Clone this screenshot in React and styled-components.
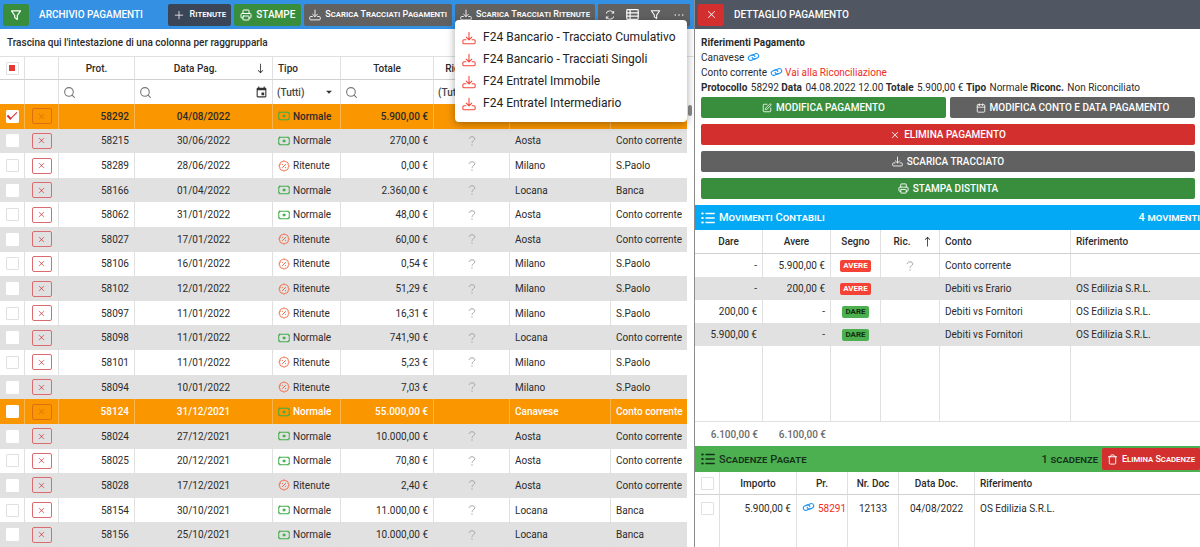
import styled, { createGlobalStyle, css } from "styled-components"
import {
  LiaEllipsisHSolid,
  LiaLongArrowAltDownSolid,
  LiaLongArrowAltUpSolid,
  LiaPlusSolid,
  LiaSyncSolid,
  LiaTimesSolid,
} from "react-icons/lia"
import { MdArrowDropDown, MdEvent } from "react-icons/md"
import { BadgePercent, Calendar, Printer, Search, SquarePen, Trash } from "lucide-react"

const GlobalStyle = createGlobalStyle`
  * {
    box-sizing: border-box;
  }
  body {
    margin: 0;
    background: #fff;
    color: #2b2b2b;
    font: 10px/15px Roboto, sans-serif;
  }
  button, input, select {
    font: inherit;
    color: inherit;
  }
  svg {
    flex: none;
  }
`

const colors = {
  green: "#388e3c",
  red: "#d32f2f",
  grey: "#616161",
  slate: "#3b4558",
}

const Page = styled.div`
  display: grid;
  grid-template-columns: minmax(0, 694fr) minmax(0, 506fr);
  height: 100vh;
  overflow: hidden;
`

const Pane = styled.section`
  display: flex;
  flex-direction: column;
  min-width: 0;
  min-height: 0;
`

const DetailPane = styled(Pane)`
  border-left: 1px solid #8c8c8c;
  overflow: hidden;
`

const Toolbar = styled.header`
  display: flex;
  align-items: center;
  gap: 3px;
  height: 29px;
  padding: 0 4px 0 3px;
  color: #fff;
  background: ${({ $dark }) => ($dark ? "#505662" : "#3390e3")};
`

const Title = styled.h1`
  flex: 1;
  margin: 0;
  padding-left: 7px;
  font-size: 10px;
  font-weight: 500;
  white-space: nowrap;
`

const Button = styled.button`
  display: flex;
  align-items: center;
  justify-content: center;
  gap: 4px;
  height: 22px;
  padding: 0 6px;
  border: 0;
  border-radius: 2px;
  font-size: 10px;
  font-weight: 500;
  white-space: nowrap;
  color: #fff;
  background: ${({ $color }) => colors[$color]};
  ${({ $caps }) =>
    $caps &&
    css`
      padding: 0 5px;
      font-size: 9px;
      font-variant: small-caps;
    `}
  ${({ $square }) =>
    $square &&
    css`
      flex: none;
      width: 26px;
      padding: 0;
    `}
`

const ButtonGroup = styled.div`
  display: flex;
  border-radius: 2px;
  background: ${colors.grey};
`

const GroupButton = styled(Button)`
  width: 23px;
  padding: 0;
`

const MenuAnchor = styled.div`
  position: relative;
`

const Menu = styled.ul`
  position: absolute;
  top: 16px;
  left: 0;
  z-index: 2;
  width: 232px;
  margin: 0;
  padding: 7px 0;
  list-style: none;
  border-radius: 4px;
  background: #fff;
  box-shadow: 0 2px 8px rgba(0, 0, 0, 0.35);
`

const MenuItem = styled.button`
  display: flex;
  align-items: center;
  gap: 7px;
  width: 100%;
  height: 22px;
  padding: 0 7px;
  border: 0;
  background: none;
  font-size: 12px;
  white-space: nowrap;
  color: #222;
  svg {
    color: #f44336;
  }
`

const GroupPanel = styled.div`
  height: 27px;
  padding: 6px 7px;
  font-weight: 500;
`

const GridArea = styled.div`
  display: flex;
  flex: 1;
  min-height: 0;
`

const TableWrap = styled.div`
  flex: 1;
  min-width: 0;
  min-height: 0;
`

const ScrollTrack = styled.div`
  width: 7px;
  padding: 48px 2px 0 1px;
  border-top: 1px solid #e0e0e0;
`

const ScrollThumb = styled.div`
  height: 11px;
  border-radius: 2px;
  background: #8a8a8a;
`

const Table = styled.table`
  width: 100%;
  height: 100%;
  table-layout: fixed;
  border-collapse: separate;
  border-spacing: 0;
`

const cell = css`
  padding: 0 5px;
  border-right: 1px solid #e0e0e0;
  text-align: ${({ $align }) => $align || "left"};
  white-space: nowrap;
  overflow: hidden;
  &:last-child {
    border-right: 0;
  }
`

const Th = styled.th`
  ${cell}
  height: ${({ $height }) => $height || 24}px;
  font-weight: 500;
  border-top: ${({ $top }) => ($top ? "1px solid #e0e0e0" : "0")};
  border-bottom: ${({ $bottom }) => ($bottom ? "1px solid #d0d0d0" : "0")};
`

const FilterCell = styled(Th)`
  padding: 0 4px;
`

const Td = styled.td`
  ${cell}
`

const Row = styled.tr`
  background: ${({ $striped }) => ($striped ? "#e1e1e1" : "#fff")};
  ${({ $height }) =>
    $height &&
    css`
      height: ${$height}px;
    `}
  ${({ $selected }) =>
    $selected &&
    css`
      background: #f99600;
      font-weight: 500;
      color: ${$selected === "light" ? "#fff" : "#2b2b2b"};
      ${Td} {
        border-color: #fbb54c;
      }
    `}
`

const Flex = styled.div`
  display: flex;
  align-items: center;
  gap: 3px;
`

const HeadLabel = styled.span`
  flex: 1;
`

const Checkbox = styled.input.attrs({ type: "checkbox" })`
  appearance: none;
  display: grid;
  place-items: center;
  width: 13px;
  height: 13px;
  margin: 0 auto;
  border: 1px solid ${({ $bare }) => ($bare ? "#fff" : "#e0e0e0")};
  border-radius: 1px;
  background: #fff;
  &:checked::after {
    content: "";
    width: 8px;
    height: 4px;
    margin-top: -3px;
    border: solid ${colors.red};
    border-width: 0 0 1px 2px;
    transform: rotate(-45deg);
  }
`

const CheckAll = styled(Checkbox)`
  &:checked::after {
    width: 6px;
    height: 6px;
    margin: 0;
    border: 0;
    background: #e53935;
    transform: none;
  }
`

const DeleteButton = styled.button`
  display: flex;
  align-items: center;
  justify-content: center;
  width: 20px;
  height: 16px;
  margin: 0 auto;
  padding: 0;
  border: 1px solid #dc6b70;
  border-radius: 2px;
  background: none;
  color: #d0454c;
  &:disabled {
    border-color: #dc6f10;
    color: #dc6f10;
  }
`

const FilterBox = styled.label`
  display: flex;
  align-items: center;
  color: #777;
`

const FilterInput = styled.input`
  flex: 1;
  width: 0;
  min-width: 0;
  padding: 0 4px;
  border: 0;
  outline: 0;
  background: none;
`

const FilterSelect = styled.select`
  appearance: none;
  flex: 1;
  width: 0;
  padding: 0;
  border: 0;
  outline: 0;
  background: none;
  color: #444;
`

const TypeIcon = styled.span`
  display: flex;
  color: ${({ $kind }) => ($kind === "Normale" ? "#3fae49" : "#f4623a")};
`

const QuestionSvg = styled.svg`
  display: block;
  margin: 0 auto;
  color: #a5a5a5;
`

const Info = styled.div`
  padding: 6px 6px 2px;
  p {
    margin: 0;
    white-space: nowrap;
  }
  b {
    margin-right: 1px;
    font-weight: 700;
  }
  svg {
    vertical-align: -1px;
  }
`

const RedLink = styled.a`
  color: #f12c22;
  text-decoration: none;
`

const IconLink = styled.a`
  color: #2196f3;
`

const Actions = styled.div`
  display: grid;
  grid-template-columns: 1fr 1fr;
  gap: 6px 4px;
  padding: 0 5px 6px 6px;
`

const ActionButton = styled(Button)`
  grid-column: ${({ $wide }) => ($wide ? "1 / -1" : "auto")};
  height: 21px;
`

const SectionBar = styled.div`
  display: flex;
  align-items: center;
  gap: 4px;
  height: ${({ $green }) => ($green ? 26 : 25)}px;
  padding-left: 6px;
  white-space: nowrap;
  color: ${({ $green }) => ($green ? "#15301a" : "#fff")};
  background: ${({ $green }) => ($green ? "#4caf50" : "#03a9f4")};
`

const SectionTitle = styled.h2`
  flex: 1;
  margin: 0;
  font-size: 11px;
  font-weight: 500;
  font-variant: small-caps;
`

const SectionCount = styled.span`
  font-size: 11px;
  font-weight: 500;
  font-variant: small-caps;
`

const MovementsArea = styled.div`
  height: 216px;
`

const Badge = styled.span`
  display: inline-block;
  padding: 0 3px;
  border-radius: 2px;
  font-size: 8px;
  line-height: 12px;
  font-weight: 700;
  vertical-align: middle;
  color: ${({ $kind }) => ($kind === "AVERE" ? "#fff" : "#12300f")};
  background: ${({ $kind }) => ($kind === "AVERE" ? "#f44336" : "#4caf50")};
`

const TotalCell = styled.td`
  height: 25px;
  padding: 0 5px;
  border-top: 1px solid #e0e0e0;
  text-align: right;
  font-weight: 500;
  color: #6b6b6b;
`

const menuItems = [
  "F24 Bancario - Tracciato Cumulativo",
  "F24 Bancario - Tracciati Singoli",
  "F24 Entratel Immobile",
  "F24 Entratel Intermediario",
]

const payments = [
  ["58292", "04/08/2022", "Normale", "5.900,00 €", "Canavese", "Conto corrente", "dark"],
  ["58215", "30/06/2022", "Normale", "270,00 €", "Aosta", "Conto corrente"],
  ["58289", "28/06/2022", "Ritenute", "0,00 €", "Milano", "S.Paolo"],
  ["58166", "01/04/2022", "Normale", "2.360,00 €", "Locana", "Banca"],
  ["58062", "31/01/2022", "Normale", "48,00 €", "Aosta", "Conto corrente"],
  ["58027", "17/01/2022", "Ritenute", "60,00 €", "Aosta", "Conto corrente"],
  ["58106", "16/01/2022", "Ritenute", "0,54 €", "Milano", "S.Paolo"],
  ["58102", "12/01/2022", "Ritenute", "51,29 €", "Milano", "S.Paolo"],
  ["58097", "11/01/2022", "Ritenute", "16,31 €", "Milano", "S.Paolo"],
  ["58098", "11/01/2022", "Normale", "741,90 €", "Locana", "Conto corrente"],
  ["58101", "11/01/2022", "Ritenute", "5,23 €", "Milano", "S.Paolo"],
  ["58094", "10/01/2022", "Ritenute", "7,03 €", "Milano", "S.Paolo"],
  ["58124", "31/12/2021", "Normale", "55.000,00 €", "Canavese", "Conto corrente", "light"],
  ["58024", "27/12/2021", "Normale", "10.000,00 €", "Aosta", "Conto corrente"],
  ["58025", "20/12/2021", "Normale", "70,80 €", "Aosta", "Conto corrente"],
  ["58028", "17/12/2021", "Ritenute", "2,40 €", "Aosta", "Conto corrente"],
  ["58154", "30/10/2021", "Normale", "11.000,00 €", "Locana", "Banca"],
  ["58156", "25/10/2021", "Normale", "10.000,00 €", "Locana", "Banca"],
]

const movements = [
  ["-", "5.900,00 €", "AVERE", "Conto corrente", ""],
  ["-", "200,00 €", "AVERE", "Debiti vs Erario", "OS Edilizia S.R.L."],
  ["200,00 €", "-", "DARE", "Debiti vs Fornitori", "OS Edilizia S.R.L."],
  ["5.900,00 €", "-", "DARE", "Debiti vs Fornitori", "OS Edilizia S.R.L."],
]

const stroke = {
  fill: "none",
  stroke: "currentColor",
  strokeLinecap: "round",
  strokeLinejoin: "round",
}

const DownloadIcon = ({ size = 12 }) => (
  <svg width={size} height={size} viewBox="0 0 16 16" strokeWidth="1.2" {...stroke}>
    <path d="M8 1.5v8.500M4.800 7l3.200 3.200L11.200 7" />
    <path d="M4.500 10H2.200a1.200 1.200 0 0 0-1.200 1.200v2.100a1.200 1.200 0 0 0 1.200 1.200h11.600a1.200 1.200 0 0 0 1.200-1.200v-2.100a1.200 1.200 0 0 0-1.200-1.200h-2.300" />
  </svg>
)

const FunnelIcon = ({ size = 12 }) => (
  <svg width={size} height={size} viewBox="0 0 16 16" strokeWidth="1.6" {...stroke}>
    <path d="M2 2.5h12L9.7 8.7v5.3L6.3 11.5V8.7z" />
  </svg>
)

const TableListIcon = () => (
  <svg width="13" height="13" viewBox="0 0 16 16" strokeWidth="1.5" {...stroke}>
    <rect x="1" y="2" width="14" height="12" rx="1" />
    <path d="M1 6h14M1 10h14M5 2v12" />
  </svg>
)

const LinkIcon = () => (
  <svg width="13" height="10" viewBox="0 0 16 12" strokeWidth="1.4" {...stroke}>
    <g transform="rotate(-25 8 6)">
      <path d="M8.5 8.6H4.2a2.8 2.8 0 0 1 0-5.6H7a2.8 2.8 0 0 1 2.7 3.5" />
      <path d="M7.5 3.4h4.3a2.8 2.8 0 0 1 0 5.6H9a2.8 2.8 0 0 1-2.7-3.5" />
    </g>
  </svg>
)

const MoneyIcon = () => (
  <svg width="12" height="12" viewBox="0 0 16 16" strokeWidth="1.3" {...stroke}>
    <rect x="1" y="3" width="14" height="10" rx="1" />
    <path d="M1 5.200 3.200 3M15 5.200 12.800 3M1 10.800 3.200 13M15 10.800 12.800 13" />
    <circle cx="8" cy="8" r="1.4" fill="currentColor" />
  </svg>
)

const ListIcon = () => (
  <svg width="14" height="12" viewBox="0 0 14 12" strokeWidth="1.5" {...stroke}>
    <path d="M5 1.5h8.2M5 6h8.2M5 10.5h8.2" />
    <path d="M1.3 1.5h.4M1.3 6h.4M1.3 10.5h.4" strokeWidth="2.2" />
  </svg>
)

const Unknown = () => (
  <QuestionSvg width="8" height="10" viewBox="0 0 8 10" strokeWidth="1" {...stroke}>
    <path d="M1.2 2.5C1.5 1.3 2.6.8 4 .8c1.7 0 2.8.8 2.8 2C6.8 4.600 4 4.500 4 6.500" />
    <path d="M4 8.9v.1" strokeWidth="1.3" />
  </QuestionSvg>
)

const Columns = ({ widths }) => (
  <colgroup>
    {widths.map((width, i) => (
      <col key={i} width={width} />
    ))}
  </colgroup>
)

const TextFilter = ({ label, calendar }) => (
  <FilterBox>
    <Search size={13} />
    <FilterInput type="text" aria-label={label} />
    {calendar && <MdEvent size={13} color="#333" />}
  </FilterBox>
)

const SelectFilter = ({ label }) => (
  <FilterBox>
    <FilterSelect aria-label={label}>
      <option>(Tutti)</option>
    </FilterSelect>
    <MdArrowDropDown size={14} color="#333" />
  </FilterBox>
)

const PaymentsTable = () => (
  <Table>
    <Columns widths={[25, 34, 76, 138, 68, 93, 76, 101, 76]} />
    <thead>
      <tr>
        <Th $top $bottom>
          <CheckAll defaultChecked aria-label="Seleziona tutti" />
        </Th>
        <Th $top $bottom />
        <Th $top $bottom $align="center">Prot.</Th>
        <Th $top $bottom $align="center">
          <Flex>
            <HeadLabel>Data Pag.</HeadLabel>
            <LiaLongArrowAltDownSolid size={13} />
          </Flex>
        </Th>
        <Th $top $bottom>Tipo</Th>
        <Th $top $bottom $align="center">Totale</Th>
        <Th $top $bottom $align="center">Riconciliato</Th>
        <Th $top $bottom aria-label="Immobile" />
        <Th $top $bottom aria-label="Conto" />
      </tr>
      <tr>
        <FilterCell />
        <FilterCell />
        <FilterCell><TextFilter label="Filtra Prot." /></FilterCell>
        <FilterCell><TextFilter label="Filtra Data Pag." calendar /></FilterCell>
        <FilterCell><SelectFilter label="Filtra Tipo" /></FilterCell>
        <FilterCell><TextFilter label="Filtra Totale" /></FilterCell>
        <FilterCell><SelectFilter label="Filtra Riconciliato" /></FilterCell>
        <FilterCell><TextFilter label="Filtra Immobile" /></FilterCell>
        <FilterCell><TextFilter label="Filtra Conto" /></FilterCell>
      </tr>
    </thead>
    <tbody>
      {payments.map(([prot, date, type, total, place, account, selected], i) => (
        <Row key={prot} $striped={i % 2 === 1} $selected={selected}>
          <Td>
            <Checkbox
              $bare={selected || i % 2 === 1}
              defaultChecked={i === 0}
              aria-label={`Seleziona ${prot}`}
            />
          </Td>
          <Td>
            <DeleteButton disabled={Boolean(selected)} aria-label={`Elimina ${prot}`}>
              <LiaTimesSolid size={9} />
            </DeleteButton>
          </Td>
          <Td $align="right">{prot}</Td>
          <Td $align="center">{date}</Td>
          <Td>
            <Flex>
              <TypeIcon $kind={type}>
                {type === "Normale" ? <MoneyIcon /> : <BadgePercent size={12} />}
              </TypeIcon>
              {type}
            </Flex>
          </Td>
          <Td $align="right">{total}</Td>
          <Td>{!selected && <Unknown />}</Td>
          <Td>{place}</Td>
          <Td>{account}</Td>
        </Row>
      ))}
    </tbody>
  </Table>
)

const MovementsTable = () => (
  <Table>
    <Columns widths={[68, 68, 50, 59, 131, 129]} />
    <thead>
      <tr>
        <Th $bottom $align="center">Dare</Th>
        <Th $bottom $align="center">Avere</Th>
        <Th $bottom $align="center">Segno</Th>
        <Th $bottom $align="center">
          <Flex>
            <HeadLabel>Ric.</HeadLabel>
            <LiaLongArrowAltUpSolid size={13} />
          </Flex>
        </Th>
        <Th $bottom>Conto</Th>
        <Th $bottom>Riferimento</Th>
      </tr>
    </thead>
    <tbody>
      {movements.map(([dare, avere, segno, conto, riferimento], i) => (
        <Row key={i} $striped={i % 2 === 1} $height={23}>
          <Td $align="right">{dare}</Td>
          <Td $align="right">{avere}</Td>
          <Td $align="center">
            <Badge $kind={segno}>{segno}</Badge>
          </Td>
          <Td>{i === 0 && <Unknown />}</Td>
          <Td>{conto}</Td>
          <Td>{riferimento}</Td>
        </Row>
      ))}
      <Row>
        <Td />
        <Td />
        <Td />
        <Td />
        <Td />
        <Td />
      </Row>
    </tbody>
    <tfoot>
      <tr>
        <TotalCell>6.100,00 €</TotalCell>
        <TotalCell>6.100,00 €</TotalCell>
        <TotalCell colSpan={4} />
      </tr>
    </tfoot>
  </Table>
)

const DeadlinesTable = () => (
  <Table>
    <Columns widths={[25, 77, 51, 51, 76, 225]} />
    <thead>
      <tr>
        <Th $bottom $height={23}>
          <Checkbox aria-label="Seleziona tutte le scadenze" />
        </Th>
        <Th $bottom $height={23} $align="center">Importo</Th>
        <Th $bottom $height={23} $align="center">Pr.</Th>
        <Th $bottom $height={23} $align="center">Nr. Doc</Th>
        <Th $bottom $height={23} $align="center">Data Doc.</Th>
        <Th $bottom $height={23}>Riferimento</Th>
      </tr>
    </thead>
    <tbody>
      <Row $height={26}>
        <Td>
          <Checkbox aria-label="Seleziona scadenza 58291" />
        </Td>
        <Td $align="right">5.900,00 €</Td>
        <Td>
          <Flex>
            <IconLink href="#58291" aria-label="Apri 58291">
              <LinkIcon />
            </IconLink>
            <RedLink href="#58291">58291</RedLink>
          </Flex>
        </Td>
        <Td $align="center">12133</Td>
        <Td $align="center">04/08/2022</Td>
        <Td>OS Edilizia S.R.L.</Td>
      </Row>
      <Row>
        <Td />
        <Td />
        <Td />
        <Td />
        <Td />
        <Td />
      </Row>
    </tbody>
  </Table>
)

const Archive = () => (
  <Pane>
    <Toolbar>
      <Button $color="green" $square aria-label="Filtra">
        <FunnelIcon size={12} />
      </Button>
      <Title>ARCHIVIO PAGAMENTI</Title>
      <Button $color="slate" $caps>
        <LiaPlusSolid size={12} />
        Ritenute
      </Button>
      <Button $color="green">
        <Printer size={12} />
        STAMPE
      </Button>
      <Button $color="grey" $caps>
        <DownloadIcon />
        Scarica Tracciati Pagamenti
      </Button>
      <MenuAnchor>
        <Button $color="grey" $caps aria-haspopup="true" aria-expanded="true">
          <DownloadIcon />
          Scarica Tracciati Ritenute
        </Button>
        <Menu>
          {menuItems.map((item) => (
            <li key={item}>
              <MenuItem>
                <DownloadIcon size={14} />
                {item}
              </MenuItem>
            </li>
          ))}
        </Menu>
      </MenuAnchor>
      <ButtonGroup>
        <GroupButton $color="grey" aria-label="Aggiorna">
          <LiaSyncSolid size={12} />
        </GroupButton>
        <GroupButton $color="grey" aria-label="Colonne">
          <TableListIcon />
        </GroupButton>
        <GroupButton $color="grey" aria-label="Filtri">
          <FunnelIcon size={11} />
        </GroupButton>
        <GroupButton $color="grey" aria-label="Altro">
          <LiaEllipsisHSolid size={12} />
        </GroupButton>
      </ButtonGroup>
    </Toolbar>
    <GroupPanel>Trascina qui l'intestazione di una colonna per raggrupparla</GroupPanel>
    <GridArea>
      <TableWrap>
        <PaymentsTable />
      </TableWrap>
      <ScrollTrack>
        <ScrollThumb />
      </ScrollTrack>
    </GridArea>
  </Pane>
)

const Detail = () => (
  <DetailPane>
    <Toolbar $dark>
      <Button $color="red" $square aria-label="Chiudi">
        <LiaTimesSolid size={11} />
      </Button>
      <Title>DETTAGLIO PAGAMENTO</Title>
    </Toolbar>
    <Info>
      <p><b>Riferimenti Pagamento</b></p>
      <p>
        Canavese{" "}
        <IconLink href="#immobile" aria-label="Apri Canavese">
          <LinkIcon />
        </IconLink>
      </p>
      <p>
        Conto corrente{" "}
        <IconLink href="#conto" aria-label="Apri Conto corrente">
          <LinkIcon />
        </IconLink>{" "}
        <RedLink href="#riconciliazione">Vai alla Riconciliazione</RedLink>
      </p>
      <p>
        <b>Protocollo</b> 58292 <b>Data</b> 04.08.2022 12.00 <b>Totale</b> 5.900,00 €{" "}
        <b>Tipo</b> Normale <b>Riconc.</b> Non Riconciliato
      </p>
    </Info>
    <Actions>
      <ActionButton $color="green">
        <SquarePen size={10} />
        MODIFICA PAGAMENTO
      </ActionButton>
      <ActionButton $color="grey">
        <Calendar size={10} />
        MODIFICA CONTO E DATA PAGAMENTO
      </ActionButton>
      <ActionButton $color="red" $wide>
        <LiaTimesSolid size={10} />
        ELIMINA PAGAMENTO
      </ActionButton>
      <ActionButton $color="grey" $wide>
        <DownloadIcon size={11} />
        SCARICA TRACCIATO
      </ActionButton>
      <ActionButton $color="green" $wide>
        <Printer size={11} />
        STAMPA DISTINTA
      </ActionButton>
    </Actions>
    <SectionBar>
      <ListIcon />
      <SectionTitle>Movimenti Contabili</SectionTitle>
      <SectionCount>4 movimenti</SectionCount>
    </SectionBar>
    <MovementsArea>
      <MovementsTable />
    </MovementsArea>
    <SectionBar $green>
      <ListIcon />
      <SectionTitle>Scadenze Pagate</SectionTitle>
      <SectionCount>1 scadenze</SectionCount>
      <Button $color="red" $caps>
        <Trash size={11} />
        Elimina Scadenze
      </Button>
    </SectionBar>
    <TableWrap>
      <DeadlinesTable />
    </TableWrap>
  </DetailPane>
)

export default function App() {
  return (
    <>
      <GlobalStyle />
      <Page>
        <Archive />
        <Detail />
      </Page>
    </>
  )
}
